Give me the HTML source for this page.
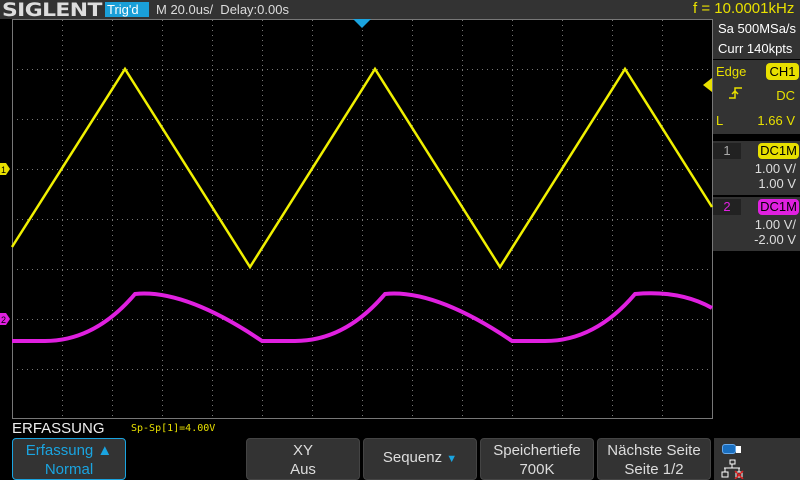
<!DOCTYPE html>
<html><head><style>
*{margin:0;padding:0;box-sizing:border-box}
body{width:800px;height:480px;background:#000;overflow:hidden;position:relative;font-family:"Liberation Sans",sans-serif;color:#fff}
.a{position:absolute}
.btn{position:absolute;top:438px;height:42px;background:#333;border:1px solid #444;border-radius:4px;color:#ddd;font-size:15px;text-align:center;line-height:19px;padding-top:2px}
.rp{position:absolute;left:713px;width:87px;background:#333}
</style></head><body>
<div class="a" style="left:0;top:0;width:800px;height:19px;background:#333"></div>
<div class="a" style="left:2px;top:-1px;font-size:19px;font-weight:bold;color:#ddd;letter-spacing:-0.5px;font-family:'DejaVu Sans',sans-serif;transform:scaleX(1.15);transform-origin:left">SIGLENT</div>
<div class="a" style="left:105px;top:2px;width:44px;height:15px;background:#1a9fd8;color:#fff;font-size:13px;line-height:15px;padding-left:2px">Trig'd</div>
<div class="a" style="left:156px;top:2px;font-size:13px;color:#ddd">M 20.0us/&nbsp; Delay:0.00s</div>
<div class="a" style="left:693px;top:0px;font-size:15px;color:#e8e000">f = 10.0001kHz</div>

<svg class="a" style="left:0;top:0" width="800" height="480">
<g stroke="#777" stroke-width="1" stroke-dasharray="1 4">
<line x1="62.5" y1="20" x2="62.5" y2="418"/><line x1="112.5" y1="20" x2="112.5" y2="418"/><line x1="162.5" y1="20" x2="162.5" y2="418"/><line x1="212.5" y1="20" x2="212.5" y2="418"/><line x1="262.5" y1="20" x2="262.5" y2="418"/><line x1="312.5" y1="20" x2="312.5" y2="418"/><line x1="362.5" y1="20" x2="362.5" y2="418"/><line x1="412.5" y1="20" x2="412.5" y2="418"/><line x1="462.5" y1="20" x2="462.5" y2="418"/><line x1="512.5" y1="20" x2="512.5" y2="418"/><line x1="562.5" y1="20" x2="562.5" y2="418"/><line x1="612.5" y1="20" x2="612.5" y2="418"/><line x1="662.5" y1="20" x2="662.5" y2="418"/>
<line x1="12" y1="69.5" x2="712" y2="69.5"/><line x1="12" y1="119.5" x2="712" y2="119.5"/><line x1="12" y1="169.5" x2="712" y2="169.5"/><line x1="12" y1="219.5" x2="712" y2="219.5"/><line x1="12" y1="269.5" x2="712" y2="269.5"/><line x1="12" y1="319.5" x2="712" y2="319.5"/><line x1="12" y1="369.5" x2="712" y2="369.5"/>
</g>
<rect x="12.5" y="19.5" width="700" height="399" fill="none" stroke="#777"/>
<polygon points="353,19 371,19 362,28" fill="#1aa4e0"/>
<polyline points="12,247 125,69 250,267 375,69 500,267 625,69 712,207" fill="none" stroke="#f0f000" stroke-width="2.5"/>
<path d="M12 341 L45 341 Q95 341 135 294 Q185 289 262 341 L295 341 Q345 341 385 294 Q435 289 512 341 L545 341 Q595 341 635 294 Q680 290 712 308" fill="none" stroke="#e020e0" stroke-width="4"/>
<polygon points="0,163 6,163 10,169 6,175 0,175" fill="#e8e000"/>
<text x="1" y="173" font-size="9" fill="#000" font-family="Liberation Sans">1</text>
<polygon points="0,313 6,313 10,319 6,325 0,325" fill="#e020e0"/>
<text x="1" y="323" font-size="9" fill="#000" font-family="Liberation Sans">2</text>
<polygon points="703,85 712,78 712,92" fill="#e8e000"/>
</svg>

<div class="rp" style="top:19px;height:40px;font-size:13px;line-height:20px;padding-left:5px">Sa 500MSa/s<br>Curr 140kpts</div>
<div class="rp" style="top:60px;height:74px;font-size:13px;color:#e8e000">
<div class="a" style="left:3px;top:4px">Edge</div>
<div class="a" style="left:53px;top:3px;width:33px;height:17px;background:#e8e000;color:#000;border-radius:4px;text-align:center;line-height:17px">CH1</div>
<svg class="a" style="left:15px;top:26px" width="16" height="14"><path d="M1 12H7V2H14M4 8L7 5 10 8" stroke="#e8e000" fill="none" stroke-width="1.5"/></svg>
<div class="a" style="right:5px;top:28px">DC</div>
<div class="a" style="left:3px;top:53px">L</div>
<div class="a" style="right:5px;top:53px">1.66 V</div>
</div>
<div class="rp" style="top:141px;height:54px;font-size:13px;color:#ddd;text-align:right;padding-right:4px">
<div class="a" style="left:0;top:2px;width:28px;height:16px;background:#222;color:#aaa;text-align:center">1</div>
<div class="a" style="right:1px;top:2px;width:41px;height:16px;background:#e8e000;color:#000;border-radius:4px;text-align:center;line-height:16px">DC1M</div>
<div style="padding-top:20px;line-height:15px">1.00 V/<br>1.00 V</div>
</div>
<div class="rp" style="top:197px;height:54px;font-size:13px;color:#ddd;text-align:right;padding-right:4px">
<div class="a" style="left:0;top:2px;width:28px;height:16px;background:#222;color:#e020e0;text-align:center">2</div>
<div class="a" style="right:1px;top:2px;width:41px;height:16px;background:#e020e0;color:#000;border-radius:4px;text-align:center;line-height:16px">DC1M</div>
<div style="padding-top:20px;line-height:15px">1.00 V/<br>-2.00 V</div>
</div>

<div class="a" style="left:12px;top:420px;font-size:15px;color:#eee">ERFASSUNG</div>
<div class="a" style="left:131px;top:423px;font-size:10px;color:#e8e000;font-family:'DejaVu Sans Mono',monospace">Sp-Sp[1]=4.00V</div>
<div class="btn" style="left:12px;width:114px;border-color:#1aa4e0;color:#1aa4e0">Erfassung ▲<br>Normal</div>
<div class="btn" style="left:246px;width:114px">XY<br>Aus</div>
<div class="btn" style="left:363px;width:114px;line-height:38px;padding:0">Sequenz <span style="color:#1aa4e0;font-size:11px">▼</span></div>
<div class="btn" style="left:480px;width:114px">Speichertiefe<br>700K</div>
<div class="btn" style="left:597px;width:114px">Nächste Seite<br>Seite 1/2</div>
<div class="a" style="left:714px;top:438px;width:86px;height:42px;background:#333"></div>
<div class="a" style="left:722px;top:444px;width:14px;height:10px;background:#1a6fc0;border:1px solid #6ae;border-radius:3px"></div>
<div class="a" style="left:736px;top:446px;width:5px;height:7px;background:#fff"></div>
<svg class="a" style="left:721px;top:459px" width="24" height="20"><path d="M9 1h5v4h-5zM11 5v4M3 9h16M4 9v4M18 9v4M1 13h6v5H1zM15 13h6v5h-6z" stroke="#fff" fill="none"/><path d="M14 12l8 8M22 12l-8 8" stroke="#e02020" stroke-width="1.5"/></svg>
</body></html>
